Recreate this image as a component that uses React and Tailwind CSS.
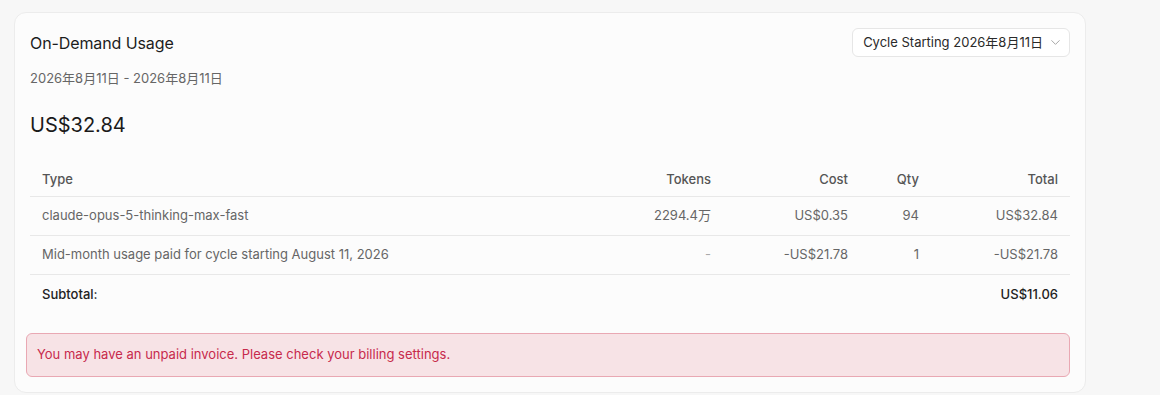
import React from "react";
import { ChevronDown } from "lucide-react";

const rows = [
  { type: "claude-opus-5-thinking-max-fast", tokens: "2294.4万", cost: "US$0.35", qty: "94", total: "US$32.84" },
  { type: "Mid-month usage paid for cycle starting August 11, 2026", tokens: "-", cost: "-US$21.78", qty: "1", total: "-US$21.78" },
];

export default function App() {
  return (
    <div
      className="w-[1160px] h-[395px] bg-[#f7f7f7] pt-[12px] pl-[14px]"
      style={{ fontFamily: 'Inter, "Noto Sans CJK SC", sans-serif' }}
    >
      <div className="w-[1072px] h-[381px] rounded-[12px] bg-[#fcfcfc] border border-[#ececec] px-[15px] pt-[15px]">
        {/* Header */}
        <div className="flex items-center justify-between h-[29px]">
          <h2 className="text-[16px] text-[#1c1c1c] tracking-[-0.1px]">On-Demand Usage</h2>
          <button className="h-[29px] flex items-center gap-[5px] pl-[10px] pr-[6px] rounded-[6px] border border-[#e6e6e6] bg-white text-[13px] text-[#2a2a2a]">
            <span>Cycle Starting 2026年8月11日</span>
            <ChevronDown className="w-[15px] h-[15px] text-[#a0a0a0]" strokeWidth={1.5} />
          </button>
        </div>

        <div className="mt-[11px] text-[13px] text-[#666] leading-[20px]">2026年8月11日 - 2026年8月11日</div>

        <div className="mt-[24px] text-[20px] text-[#1a1a1a] leading-[26px]">US$32.84</div>

        {/* Table */}
        <table className="mt-[19px] w-[1040px] text-[13px] border-collapse">
          <thead>
            <tr className="border-b border-[#e8e8e8] h-[39px]">
              <th className="text-left font-medium text-[#555] px-[12px] pt-[6px]">Type</th>
              <th className="text-right font-medium text-[#555] px-[12px] pt-[6px] w-[137px]">Tokens</th>
              <th className="text-right font-medium text-[#555] px-[12px] pt-[6px] w-[137px]">Cost</th>
              <th className="text-right font-medium text-[#555] px-[12px] pt-[6px] w-[71px]">Qty</th>
              <th className="text-right font-medium text-[#555] px-[12px] pt-[6px] w-[139px]">Total</th>
            </tr>
          </thead>
          <tbody>
            {rows.map((r) => (
              <tr key={r.type} className="border-b border-[#e8e8e8] h-[39px] text-[#666]">
                <td className="px-[12px] pt-[1px]">{r.type}</td>
                <td className={`px-[12px] pt-[1px] text-right ${r.tokens === "-" ? "text-[#aaa]" : ""}`}>{r.tokens}</td>
                <td className="px-[12px] pt-[1px] text-right">{r.cost}</td>
                <td className="px-[12px] pt-[1px] text-right">{r.qty}</td>
                <td className="px-[12px] pt-[1px] text-right">{r.total}</td>
              </tr>
            ))}
            <tr className="h-[40px]">
              <td className="px-[12px] font-medium text-[#222]">Subtotal:</td>
              <td />
              <td />
              <td />
              <td className="px-[12px] text-right font-medium text-[#222]">US$11.06</td>
            </tr>
          </tbody>
        </table>

        {/* Alert */}
        <div className="mt-[19px] ml-[-4px] w-[1044px] h-[44px] flex items-center px-[10px] rounded-[6px] bg-[#f7e3e6] border border-[#e9a8b3] text-[13px] text-[#c72a4c]">
          You may have an unpaid invoice. Please check your billing settings.
        </div>
      </div>
    </div>
  );
}
